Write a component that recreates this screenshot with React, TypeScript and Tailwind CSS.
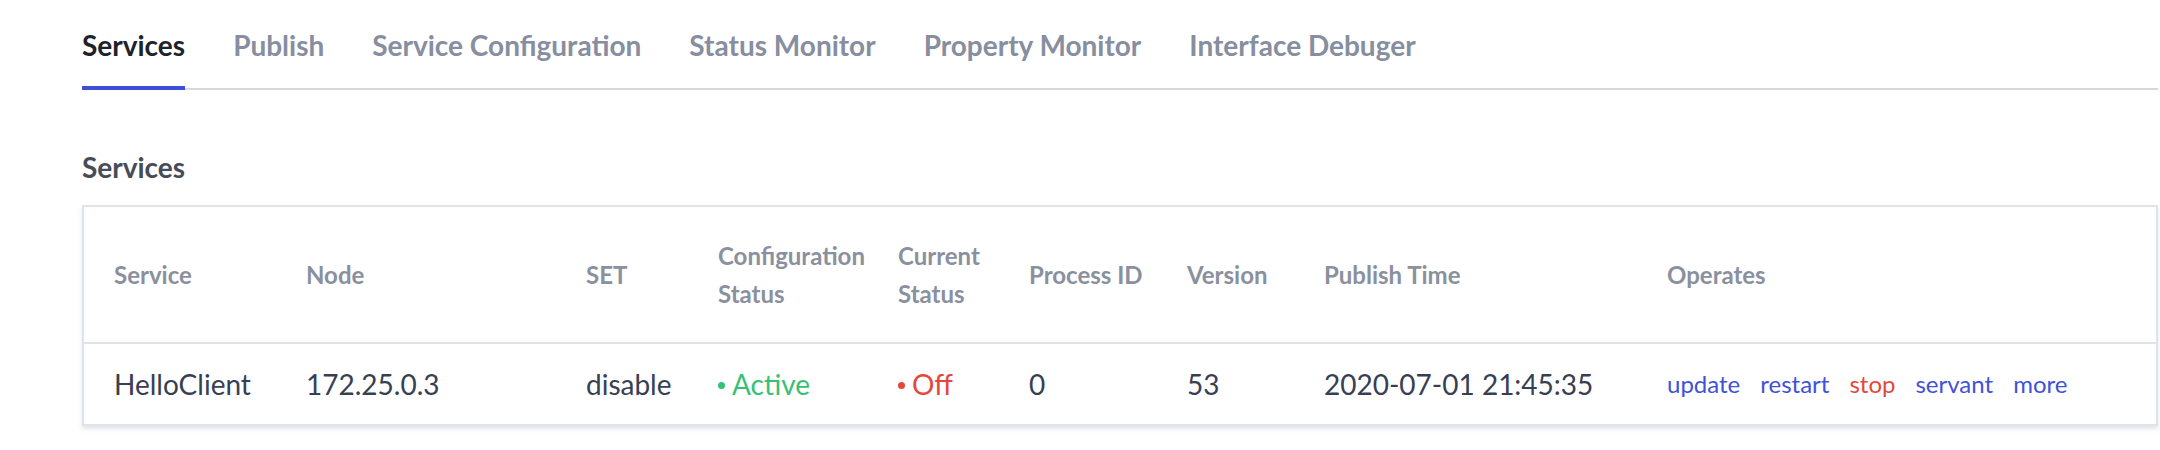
import React from "react";

const tabs = [
  "Services",
  "Publish",
  "Service Configuration",
  "Status Monitor",
  "Property Monitor",
  "Interface Debuger",
];

const cols = "grid grid-cols-[192px_280px_132px_180px_131px_158px_137px_343px_1fr]";

export default function App() {
  return (
    <div className="min-h-[450px] w-[2160px] bg-white pl-[82px] pr-[2px] font-['Lato',sans-serif]">
      {/* Tabs */}
      <div className="flex gap-x-[48px] border-b-2 border-[#d5d9df] pt-6">
        {tabs.map((t, i) => (
          <div
            key={t}
            className={
              i === 0
                ? "-mb-[2px] border-b-4 border-[#3c4fd6] pb-5 text-[28px] font-bold leading-[42px] text-[#1e2229]"
                : "-mb-[2px] border-b-4 border-transparent pb-5 text-[28px] font-bold leading-[42px] text-[#868e9f]"
            }
          >
            {t}
          </div>
        ))}
      </div>

      {/* Heading */}
      <div className="mt-[56px] mb-[17px] text-[28px] font-bold leading-[42px] text-[#464c58]">
        Services
      </div>

      {/* Table */}
      <div className="border-2 border-[#e0e3e9] shadow-[0_3px_4px_rgba(170,178,200,0.35)]">
        <div className={`${cols} h-[137px] border-b-2 border-[#e0e3e9] text-[24px] font-bold leading-[38px] text-[#8a909e]`}>
          <div className="flex items-center pl-[30px]">Service</div>
          <div className="flex items-center pl-[30px]">Node</div>
          <div className="flex items-center pl-[30px]">SET</div>
          <div className="flex items-center pl-[30px]">
            Configuration
            <br />
            Status
          </div>
          <div className="flex items-center pl-[30px]">
            Current
            <br />
            Status
          </div>
          <div className="flex items-center pl-[30px]">Process ID</div>
          <div className="flex items-center pl-[30px]">Version</div>
          <div className="flex items-center pl-[30px]">Publish Time</div>
          <div className="flex items-center pl-[30px]">Operates</div>
        </div>
        <div className={`${cols} h-[80px] text-[28px] leading-[42px] text-[#374053]`}>
          <div className="flex items-center pl-[30px]">HelloClient</div>
          <div className="flex items-center pl-[30px]">172.25.0.3</div>
          <div className="flex items-center pl-[30px]">disable</div>
          <div className="flex items-center pl-[30px] text-[#36c275]">
            <span className="mr-[7px] mt-[2px] inline-block h-[7px] w-[7px] rounded-full bg-[#36c275]" />
            Active
          </div>
          <div className="flex items-center pl-[30px] text-[#e3483a]">
            <span className="mr-[7px] mt-[2px] inline-block h-[7px] w-[7px] rounded-full bg-[#e3483a]" />
            Off
          </div>
          <div className="flex items-center pl-[30px]">0</div>
          <div className="flex items-center pl-[30px]">53</div>
          <div className="flex items-center pl-[30px]">2020-07-01 21:45:35</div>
          <div className="flex items-center gap-x-[20px] pl-[30px] text-[24px] text-[#3f52d8]">
            <span>update</span>
            <span>restart</span>
            <span className="text-[#e3483a]">stop</span>
            <span>servant</span>
            <span>more</span>
          </div>
        </div>
      </div>
    </div>
  );
}
